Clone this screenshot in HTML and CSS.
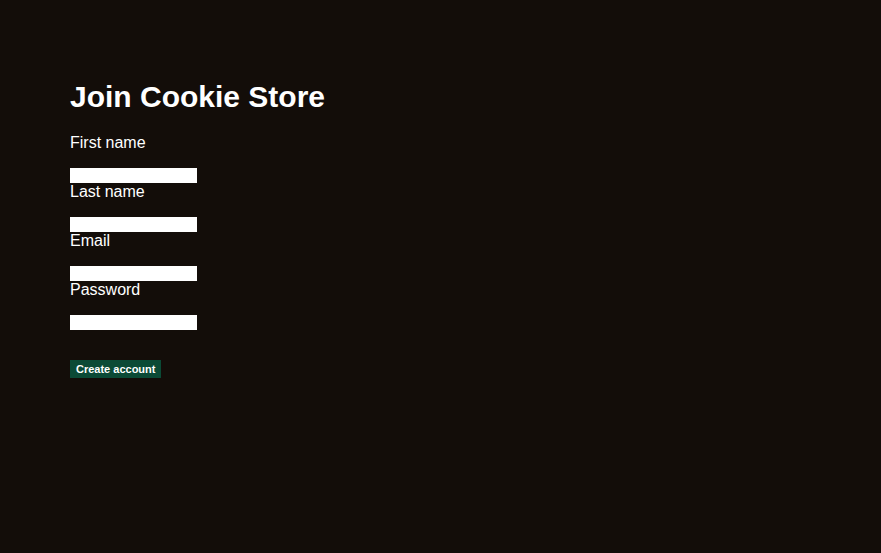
FILE: index.html
```html
<!DOCTYPE html>
<html>
<head>
<meta charset="utf-8">
<link rel="stylesheet" href="styles.css">
</head>
<body>
<main class="page">
  <h1 class="title">Join Cookie Store</h1>
  <form class="form">
    <label class="label" for="first">First name</label>
    <input class="field" id="first" type="text">
    <label class="label" for="last">Last name</label>
    <input class="field" id="last" type="text">
    <label class="label" for="email">Email</label>
    <input class="field" id="email" type="email">
    <label class="label" for="pw">Password</label>
    <input class="field" id="pw" type="password">
    <button class="submit" type="button">Create account</button>
  </form>
</main>
</body>
</html>
```
FILE: styles.css
```css
html, body {
  margin: 0;
  padding: 0;
  background: #130d09;
  height: 100%;
}
body {
  font-family: "Liberation Sans", Arial, sans-serif;
  color: #ffffff;
}
.page {
  padding: 79px 70px 0 70px;
}
.title {
  margin: 0 0 19px 0;
  font-size: 30px;
  line-height: 36px;
  font-weight: bold;
}
.form {
  display: flex;
  flex-direction: column;
  align-items: flex-start;
}
.label {
  display: block;
  font-size: 16px;
  line-height: 18px;
  margin-bottom: 16px;
}
.field {
  display: block;
  width: 127px;
  height: 15px;
  box-sizing: border-box;
  border: none;
  padding: 0;
  margin: 0;
  background: #ffffff;
}
.submit {
  margin-top: 30px;
  height: 18px;
  padding: 0 6px;
  border: none;
  background: #0b4a36;
  color: #ffffff;
  font-family: "Liberation Sans", Arial, sans-serif;
  font-size: 11px;
  font-weight: bold;
  line-height: 18px;
}
```
